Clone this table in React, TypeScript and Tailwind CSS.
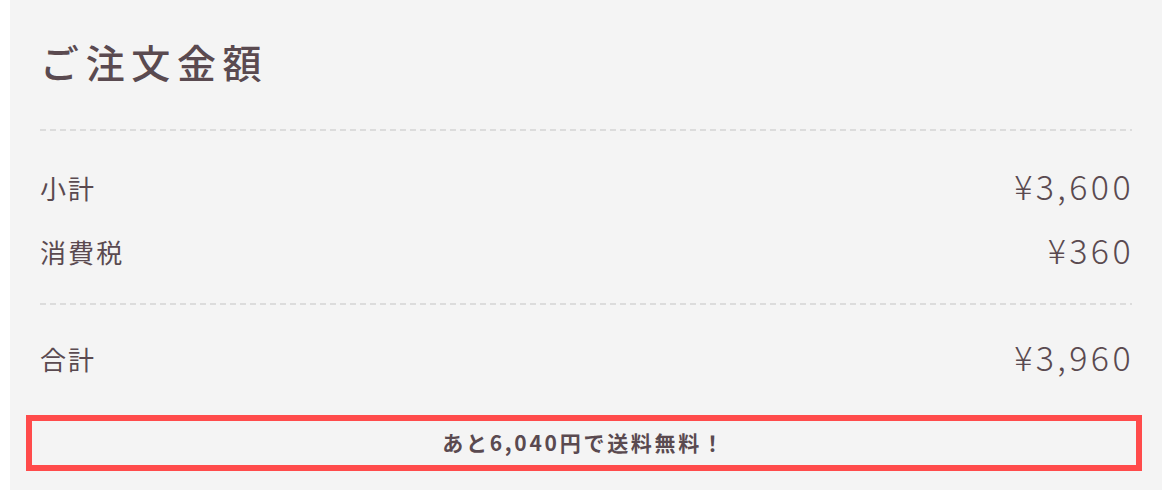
const rows = [
  { label: '小計', value: '¥3,600' },
  { label: '消費税', value: '¥360' },
];

function Dashed() {
  return <div className="h-[2px] w-full bg-[repeating-linear-gradient(90deg,#dcdcdc_0_6px,transparent_6px_10px)]" />;
}

function Row({ label, value }: { label: string; value: string }) {
  return (
    <div className="flex h-[64px] items-center justify-between">
      <span className="text-[26px] tracking-[0.08em]">{label}</span>
      <span className="mr-[-2px] mt-[-4px] text-[34px] font-light tracking-[0.1em]">{value}</span>
    </div>
  );
}

export default function App() {
  return (
    <div className="min-h-screen bg-white px-[10px] font-['Noto_Sans_CJK_JP',sans-serif] text-[#5a4a50]">
      <div className="min-h-[490px] bg-[#f4f4f4] px-[30px] pt-[33px] pb-[20px]">
        <h1 className="text-[39px] font-medium leading-[57px] tracking-[0.17em]">ご注文金額</h1>
        <div className="mt-[39px]">
          <Dashed />
        </div>
        <div className="pt-[24px] pb-[20px]">
          {rows.map(r => (
            <Row key={r.label} label={r.label} value={r.value} />
          ))}
        </div>
        <Dashed />
        <div className="mt-[21px]">
          <Row label="合計" value="¥3,960" />
        </div>
        <div className="mt-[25px] ml-[-14px] mr-[-10px] flex h-[56px] items-center justify-center border-[6px] border-[#ff4b4b]">
          <span className="text-[21px] font-bold tracking-[0.13em]">あと6,040円で送料無料！</span>
        </div>
      </div>
    </div>
  );
}
